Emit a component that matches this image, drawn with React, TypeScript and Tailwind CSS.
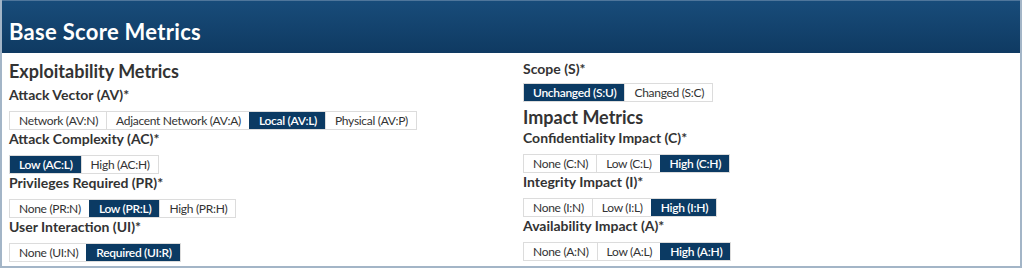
import React from "react";

type Opt = { label: string; selected?: boolean };

function Group({ opts }: { opts: Opt[] }) {
  return (
    <div className="flex">
      <div className="flex border border-[#dcdcdc] bg-white">
        {opts.map((o, i) => (
          <div
            key={i}
            className={
              o.selected
                ? "h-[17px] leading-[17px] pl-[9px] pr-[8px] text-[12px] tracking-[-0.3px] font-semibold text-white bg-[#0b3a63] border-l border-[#0b3a63] first:border-l-0"
                : "h-[17px] leading-[17px] pl-[9px] pr-[8px] text-[12px] tracking-[-0.3px] text-[#333] border-l border-[#dcdcdc] first:border-l-0"
            }
          >
            {o.label}
          </div>
        ))}
      </div>
    </div>
  );
}

function Metric({ label, opts }: { label: string; opts: Opt[] }) {
  return (
    <div className="flex flex-col h-[44px]">
      <div className="text-[14px] font-bold text-[#333] leading-[20px]">{label}</div>
      <div className="mt-[6px]">
        <Group opts={opts} />
      </div>
    </div>
  );
}

export default function App() {
  return (
    <div
      className="w-[1024px] h-[269px] bg-white"
      style={{ fontFamily: 'Lato, "Open Sans", sans-serif' }}
    >
      <div className="w-[1022px] h-[268px] border-x-2 border-b-2 border-[#a3b5c7] flex flex-col">
        <div className="h-[53px] bg-gradient-to-b from-[#184c7a] to-[#0f3a62] border-t border-[#4f769b] flex items-center pt-[9px] px-[7px]">
          <h1 className="text-[22px] font-bold text-white leading-none tracking-[0.3px]">Base Score Metrics</h1>
        </div>
        <div className="flex px-[7px]">
          <div className="w-[514px] flex flex-col pt-[7px]">
            <div className="text-[18px] font-bold text-[#333] leading-[22px] mb-[3px]">Exploitability Metrics</div>
            <Metric
              label="Attack Vector (AV)*"
              opts={[
                { label: "Network (AV:N)" },
                { label: "Adjacent Network (AV:A)" },
                { label: "Local (AV:L)", selected: true },
                { label: "Physical (AV:P)" },
              ]}
            />
            <Metric
              label="Attack Complexity (AC)*"
              opts={[{ label: "Low (AC:L)", selected: true }, { label: "High (AC:H)" }]}
            />
            <Metric
              label="Privileges Required (PR)*"
              opts={[
                { label: "None (PR:N)" },
                { label: "Low (PR:L)", selected: true },
                { label: "High (PR:H)" },
              ]}
            />
            <Metric
              label="User Interaction (UI)*"
              opts={[{ label: "None (UI:N)" }, { label: "Required (UI:R)", selected: true }]}
            />
          </div>
          <div className="flex-1 flex flex-col pt-[6px]">
            <div className="text-[14px] font-bold text-[#333] leading-[20px]">Scope (S)*</div>
            <div className="mt-[4px]">
              <Group opts={[{ label: "Unchanged (S:U)", selected: true }, { label: "Changed (S:C)" }]} />
            </div>
            <div className="text-[18px] font-bold text-[#333] leading-[22px] mt-[4px]">Impact Metrics</div>
            <Metric
              label="Confidentiality Impact (C)*"
              opts={[
                { label: "None (C:N)" },
                { label: "Low (C:L)" },
                { label: "High (C:H)", selected: true },
              ]}
            />
            <Metric
              label="Integrity Impact (I)*"
              opts={[
                { label: "None (I:N)" },
                { label: "Low (I:L)" },
                { label: "High (I:H)", selected: true },
              ]}
            />
            <Metric
              label="Availability Impact (A)*"
              opts={[
                { label: "None (A:N)" },
                { label: "Low (A:L)" },
                { label: "High (A:H)", selected: true },
              ]}
            />
          </div>
        </div>
      </div>
    </div>
  );
}
